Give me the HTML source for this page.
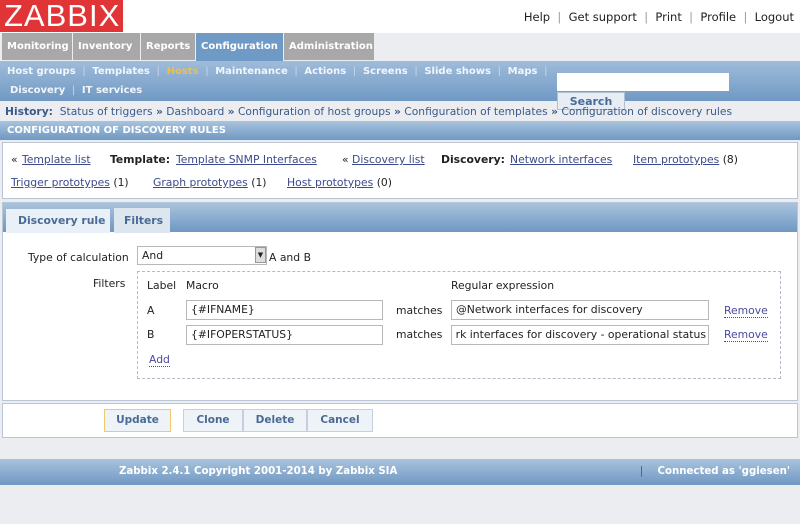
<!DOCTYPE html>
<html><head><meta charset="utf-8"><style>
*{box-sizing:border-box;margin:0;padding:0}
body{width:800px;height:524px;background:#ebedf0;font-family:"DejaVu Sans","Liberation Sans",sans-serif;font-size:10.8px;color:#222;position:relative;overflow:hidden}
.a{position:absolute;white-space:nowrap}
.b{font-weight:bold}
.w{color:#fff}
a,.u{color:#3c4a8c;text-decoration:underline}
.grad{background:linear-gradient(#a9c3dd,#6f98c3)}
.tab{position:absolute;top:33px;height:27px;background:#a8a8a8;color:#fff;font-weight:bold;padding:8px 0 0 5px;font-size:10px}
.inp{position:absolute;background:#fff;border:1px solid #b8b8b8;height:20px;padding:2px 4px;font-size:10.8px;line-height:14px;overflow:hidden;white-space:nowrap}
.btn{position:absolute;top:409px;height:23px;background:#eef3f8;border:1px solid #c5d0dc;color:#4a6a96;font-weight:bold;text-align:center;line-height:21px;font-size:10.5px}
.rm{color:#4a4a9a;border-bottom:1px dotted #4a4a9a}
.s{color:#c8d8ea;font-weight:normal}
.l{top:153px}
.l2{top:176px}
</style></head><body>
<div class="a" style="left:0;top:0;width:800px;height:33px;background:#fff"></div>
<div class="a" style="left:0;top:0;width:123px;height:32px;background:#e03436;color:#fff;font-family:'Liberation Sans',sans-serif;font-size:31px;line-height:32px;padding-left:4px;letter-spacing:1px">ZABBIX</div>
<div class="a" style="right:6px;top:10px;font-size:11.5px;color:#222">Help&nbsp; <span style="color:#999">|</span>&nbsp; Get support&nbsp; <span style="color:#999">|</span>&nbsp; Print&nbsp; <span style="color:#999">|</span>&nbsp; Profile&nbsp; <span style="color:#999">|</span>&nbsp; Logout</div>

<div class="tab" style="left:2px;width:70px">Monitoring</div>
<div class="tab" style="left:73px;width:67px">Inventory</div>
<div class="tab" style="left:141px;width:54px">Reports</div>
<div class="tab" style="left:196px;width:87px;background:#6f9ac6;height:28px">Configuration</div>
<div class="tab" style="left:284px;width:90px">Administration</div>

<div class="a" style="left:0;top:61px;width:800px;height:40px;background:linear-gradient(#9fbcda,#7099c4)"></div>
<div class="a b w" style="left:7px;top:66px;color:#f2f5fa;font-size:10px">Host groups <span class="s">&nbsp;|&nbsp;</span> Templates <span class="s">&nbsp;|&nbsp;</span> <span style="color:#f0c040">Hosts</span> <span class="s">&nbsp;|&nbsp;</span> Maintenance <span class="s">&nbsp;|&nbsp;</span> Actions <span class="s">&nbsp;|&nbsp;</span> Screens <span class="s">&nbsp;|&nbsp;</span> Slide shows <span class="s">&nbsp;|&nbsp;</span> Maps <span class="s">&nbsp;|</span></div>
<div class="a b w" style="left:10px;top:85px;color:#f2f5fa;font-size:10px">Discovery <span class="s">&nbsp;|&nbsp;</span> IT services</div>
<div class="a" style="left:557px;top:73px;width:172px;height:18px;background:#fff"></div>
<div class="a b" style="left:557px;top:92px;width:68px;height:18px;background:#e6edf5;border:1px solid #b0c0d4;color:#4a6a96;text-align:center;line-height:18px;font-size:11px">Search</div>

<div class="a" style="left:5px;top:105px;color:#3c5a8a;font-size:10.7px"><b>History:</b>&nbsp; Status of triggers <b>»</b> Dashboard <b>»</b> Configuration of host groups <b>»</b> Configuration of templates <b>»</b> Configuration of discovery rules</div>

<div class="a grad" style="left:0;top:121px;width:800px;height:19px"></div>
<div class="a b w" style="left:7px;top:125px;font-size:10px">CONFIGURATION OF DISCOVERY RULES</div>

<div class="a" style="left:2px;top:142px;width:796px;height:57px;background:#fff;border:1px solid #b8c6d6"></div>
<div class="a l" style="left:11px">«</div>
<div class="a l" style="left:22px"><a>Template list</a></div>
<div class="a l b" style="left:110px">Template:</div>
<div class="a l" style="left:176px"><a>Template SNMP Interfaces</a></div>
<div class="a l" style="left:342px">«</div>
<div class="a l" style="left:352px"><a>Discovery list</a></div>
<div class="a l b" style="left:441px">Discovery:</div>
<div class="a l" style="left:510px"><a>Network interfaces</a></div>
<div class="a l" style="left:633px"><a>Item prototypes</a> (8)</div>
<div class="a l2" style="left:11px"><a>Trigger prototypes</a> (1)</div>
<div class="a l2" style="left:153px"><a>Graph prototypes</a> (1)</div>
<div class="a l2" style="left:287px"><a>Host prototypes</a> (0)</div>

<div class="a" style="left:2px;top:202px;width:796px;height:199px;background:#fff;border:1px solid #b8c6d6"></div>
<div class="a grad" style="left:3px;top:203px;width:794px;height:29px"></div>
<div class="a b" style="left:6px;top:209px;width:104px;height:24px;background:#eaf0f7;color:#4a6a96;padding:5px 0 0 12px">Discovery rule</div>
<div class="a b" style="left:114px;top:208px;width:56px;height:25px;background:#dde6ef;color:#4a6a96;padding:6px 0 0 10px">Filters</div>

<div class="a" style="left:28px;top:251px">Type of calculation</div>
<div class="inp" style="left:137px;top:246px;width:130px;height:19px">And</div>
<div class="a" style="left:255px;top:247px;width:11px;height:16px;background:#ddd;border:1px solid #999;font-size:7px;text-align:center;line-height:14px">▼</div>
<div class="a" style="left:269px;top:251px">A and B</div>

<div class="a" style="left:93px;top:277px">Filters</div>
<div class="a" style="left:137px;top:271px;width:644px;height:108px;border:1px dashed #b8b8c8"></div>
<div class="a" style="left:147px;top:279px">Label</div>
<div class="a" style="left:186px;top:279px">Macro</div>
<div class="a" style="left:451px;top:279px">Regular expression</div>
<div class="a" style="left:147px;top:304px">A</div>
<div class="inp" style="left:186px;top:300px;width:197px">{#IFNAME}</div>
<div class="a" style="left:396px;top:304px">matches</div>
<div class="inp" style="left:451px;top:300px;width:258px">@Network interfaces for discovery</div>
<div class="a rm" style="left:724px;top:304px">Remove</div>
<div class="a" style="left:147px;top:328px">B</div>
<div class="inp" style="left:186px;top:325px;width:197px">{#IFOPERSTATUS}</div>
<div class="a" style="left:396px;top:328px">matches</div>
<div class="inp" style="left:451px;top:325px;width:258px;text-align:right;padding-right:2px;direction:rtl"><span style="direction:ltr;unicode-bidi:embed">rk interfaces for discovery - operational status</span></div>
<div class="a rm" style="left:724px;top:328px">Remove</div>
<div class="a rm" style="left:149px;top:353px">Add</div>

<div class="a" style="left:2px;top:403px;width:796px;height:35px;background:#fff;border:1px solid #b8c6d6"></div>
<div class="btn" style="left:104px;width:67px;border-color:#f0c870">Update</div>
<div class="btn" style="left:183px;width:60px">Clone</div>
<div class="btn" style="left:243px;width:64px">Delete</div>
<div class="btn" style="left:307px;width:66px">Cancel</div>

<div class="a grad" style="left:0;top:459px;width:800px;height:26px"></div>
<div class="a b w" style="left:119px;top:466px;font-size:10.2px">Zabbix 2.4.1 Copyright 2001-2014 by Zabbix SIA</div>
<div class="a b w" style="right:10px;top:466px;font-size:10.2px"><span style="color:#3a5a8a;font-weight:normal">|</span>&nbsp;&nbsp;&nbsp; Connected as 'ggiesen'</div>
</body></html>
